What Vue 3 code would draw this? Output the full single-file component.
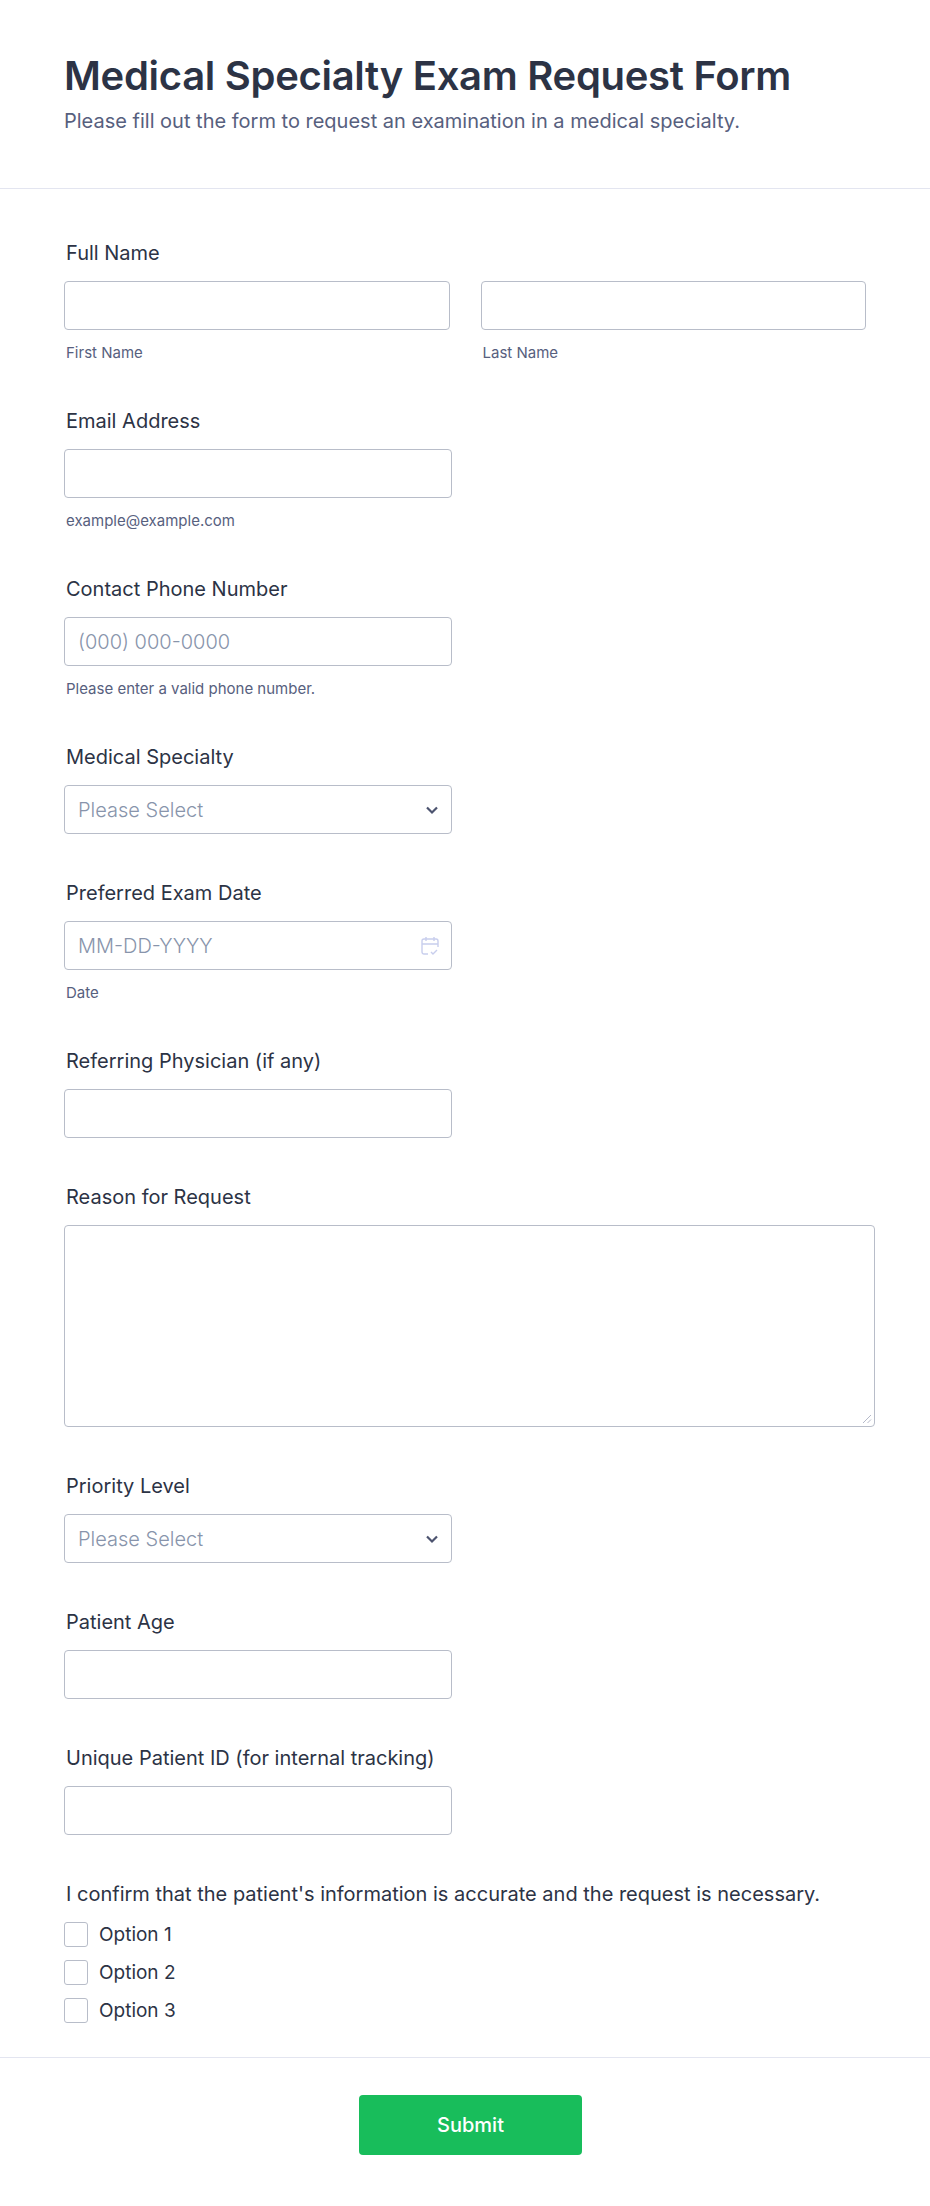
<script setup>
const options = ['Option 1', 'Option 2', 'Option 3']
</script>

<template>
  <div class="page">
    <header class="head">
      <h1 class="title">Medical Specialty Exam Request Form</h1>
      <p class="subtitle">Please fill out the form to request an examination in a medical specialty.</p>
    </header>

    <main class="fields">
      <div class="field">
        <label class="label">Full Name</label>
        <div class="name-row">
          <div class="name-col">
            <div class="input"></div>
            <div class="sub">First Name</div>
          </div>
          <div class="name-col">
            <div class="input"></div>
            <div class="sub">Last Name</div>
          </div>
        </div>
      </div>

      <div class="field">
        <label class="label">Email Address</label>
        <div class="input half"></div>
        <div class="sub">example@example.com</div>
      </div>

      <div class="field">
        <label class="label">Contact Phone Number</label>
        <div class="input half"><span class="placeholder">(000) 000-0000</span></div>
        <div class="sub">Please enter a valid phone number.</div>
      </div>

      <div class="field">
        <label class="label">Medical Specialty</label>
        <div class="input half">
          <span class="placeholder">Please Select</span>
          <svg class="chevron" width="14" height="10" viewBox="0 0 14 10">
            <path d="M2 2.5l5 5 5-5" fill="none" stroke="#4c536f" stroke-width="2.2" />
          </svg>
        </div>
      </div>

      <div class="field">
        <label class="label">Preferred Exam Date</label>
        <div class="input half">
          <span class="placeholder">MM-DD-YYYY</span>
          <svg class="calendar" width="18" height="20" viewBox="0 0 18 20" fill="none" stroke="#c8ceed" stroke-width="1.4">
            <path d="M7 18H3a2 2 0 0 1-2-2V5a2 2 0 0 1 2-2h12a2 2 0 0 1 2 2v6" />
            <path d="M1 8h16M5 1v4M13 1v4" />
            <path d="M10 16l2 2 4-4" />
          </svg>
        </div>
        <div class="sub">Date</div>
      </div>

      <div class="field">
        <label class="label">Referring Physician (if any)</label>
        <div class="input half"></div>
      </div>

      <div class="field">
        <label class="label">Reason for Request</label>
        <div class="input textarea">
          <svg class="grip" width="10" height="10" viewBox="0 0 10 10" stroke="#b5b9c9" stroke-width="1">
            <path d="M1 9l8-8M5.5 9L9 5.5" />
          </svg>
        </div>
      </div>

      <div class="field">
        <label class="label">Priority Level</label>
        <div class="input half">
          <span class="placeholder">Please Select</span>
          <svg class="chevron" width="14" height="10" viewBox="0 0 14 10">
            <path d="M2 2.5l5 5 5-5" fill="none" stroke="#4c536f" stroke-width="2.2" />
          </svg>
        </div>
      </div>

      <div class="field">
        <label class="label">Patient Age</label>
        <div class="input half"></div>
      </div>

      <div class="field">
        <label class="label">Unique Patient ID (for internal tracking)</label>
        <div class="input half"></div>
      </div>

      <div class="field last">
        <label class="label">I confirm that the patient's information is accurate and the request is necessary.</label>
        <div class="checks">
          <div v-for="o in options" :key="o" class="check">
            <span class="box"></span>
            <span>{{ o }}</span>
          </div>
        </div>
      </div>
    </main>

    <footer class="foot">
      <button class="submit" type="button">Submit</button>
    </footer>
  </div>
</template>

<style>
html, body {
  margin: 0;
  background: #fff;
}
</style>

<style scoped>
.page {
  width: 930px;
  height: 2206px;
  background: #fff;
  font-family: Inter, "Liberation Sans", sans-serif;
  color: #2c3345;
  overflow: hidden;
}

.head {
  height: 189px;
  box-sizing: border-box;
  padding: 52px 64px 0;
  border-bottom: 1px solid #e3e5f0;
}

.title {
  margin: 0;
  font-size: 40px;
  line-height: 48px;
  font-weight: 600;
  letter-spacing: -0.3px;
}

.subtitle {
  margin: 9px 0 0;
  font-size: 20px;
  line-height: 24px;
  color: #57607e;
}

.fields {
  padding: 52px 64px 0;
}

.field {
  margin-bottom: 47px;
}

.field.last {
  margin-bottom: 34px;
}

.label {
  display: block;
  margin: 0 0 16px 2px;
  font-size: 20px;
  line-height: 24px;
  font-weight: 400;
}

.name-row {
  display: flex;
  gap: 31px;
}

.name-col {
  flex: 1;
}

.input {
  position: relative;
  box-sizing: border-box;
  height: 49px;
  border: 1px solid #b8bdc9;
  border-radius: 4px;
  background: #fff;
  display: flex;
  align-items: center;
  padding-left: 13px;
}

.half {
  width: 388px;
}

.textarea {
  width: 811px;
  height: 202px;
}

.placeholder {
  font-size: 20px;
  color: #8894ab;
  font-weight: 300;
}

.sub {
  margin: 14px 0 0 2px;
  font-size: 15px;
  line-height: 18px;
  color: #57607e;
}

.chevron {
  position: absolute;
  right: 12px;
  top: 19px;
}

.calendar {
  position: absolute;
  right: 12px;
  top: 14px;
}

.grip {
  position: absolute;
  right: 2px;
  bottom: 2px;
}

.checks {
  display: flex;
  flex-direction: column;
  gap: 13px;
}

.check {
  display: flex;
  align-items: center;
  gap: 11px;
  height: 25px;
  font-size: 19px;
  color: #2c3345;
}

.box {
  box-sizing: border-box;
  width: 24px;
  height: 25px;
  border: 1px solid #b8bdc9;
  border-radius: 3px;
}

.foot {
  border-top: 1px solid #e3e5f0;
  padding: 37px 0 0 11px;
  display: flex;
  justify-content: center;
}

.submit {
  width: 223px;
  height: 60px;
  border: none;
  border-radius: 4px;
  background: #18bd5b;
  color: #fff;
  font-family: inherit;
  font-size: 20px;
  font-weight: 500;
}
</style>
